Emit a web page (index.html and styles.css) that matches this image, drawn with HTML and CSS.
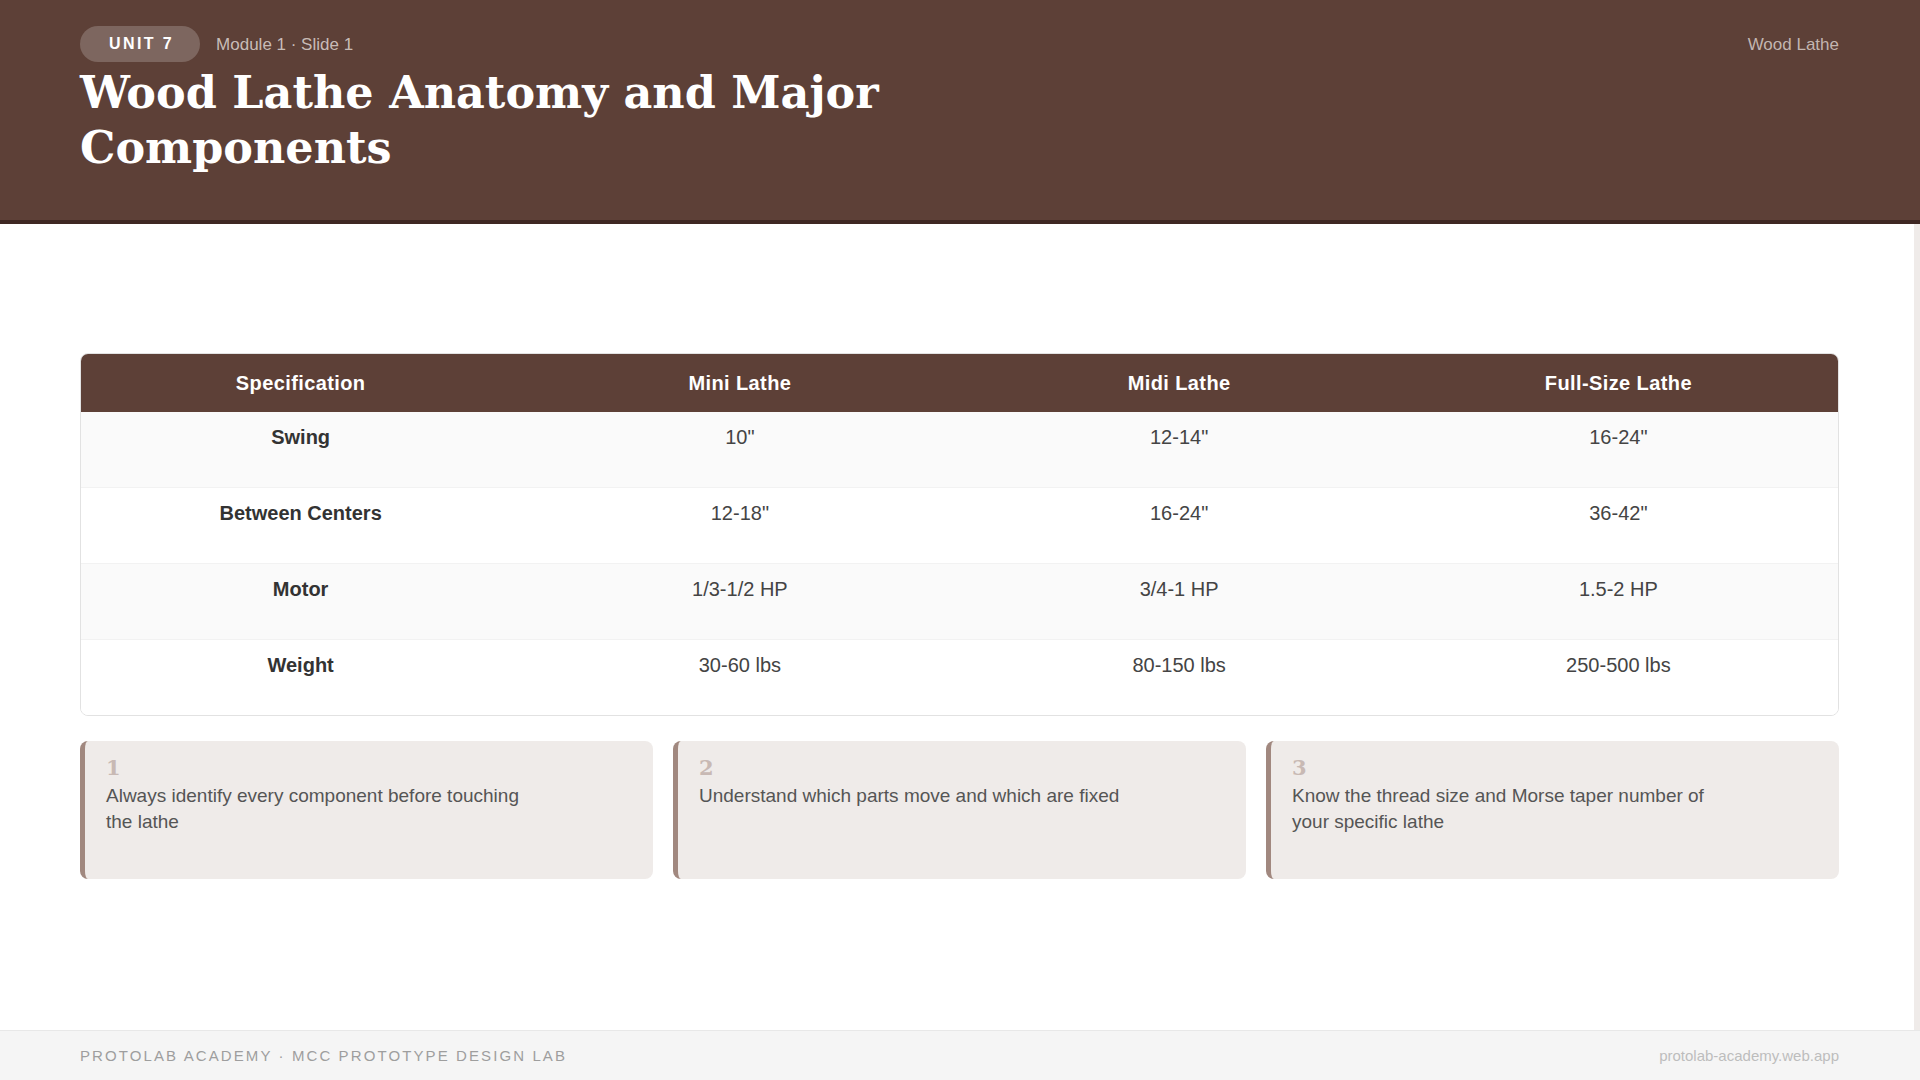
FILE: index.html
```html
<!DOCTYPE html>
<html lang="en">
<head>
<meta charset="utf-8">
<title>Wood Lathe Anatomy and Major Components</title>
<link rel="stylesheet" href="styles.css">
</head>
<body>
<div class="slide">
  <header class="top">
    <div class="top-row">
      <div class="meta">
        <span class="badge">UNIT 7</span>
        <span class="crumb">Module 1 · Slide 1</span>
      </div>
      <span class="topic">Wood Lathe</span>
    </div>
    <h1 class="title">Wood Lathe Anatomy and Major<br>Components</h1>
  </header>

  <main class="content">
    <div class="table-wrap">
      <table class="spec">
        <thead>
          <tr>
            <th>Specification</th>
            <th>Mini Lathe</th>
            <th>Midi Lathe</th>
            <th>Full-Size Lathe</th>
          </tr>
        </thead>
        <tbody>
          <tr>
            <td class="label">Swing</td>
            <td>10"</td>
            <td>12-14"</td>
            <td>16-24"</td>
          </tr>
          <tr>
            <td class="label">Between Centers</td>
            <td>12-18"</td>
            <td>16-24"</td>
            <td>36-42"</td>
          </tr>
          <tr>
            <td class="label">Motor</td>
            <td>1/3-1/2 HP</td>
            <td>3/4-1 HP</td>
            <td>1.5-2 HP</td>
          </tr>
          <tr>
            <td class="label">Weight</td>
            <td>30-60 lbs</td>
            <td>80-150 lbs</td>
            <td>250-500 lbs</td>
          </tr>
        </tbody>
      </table>
    </div>

    <div class="tips">
      <div class="tip">
        <div class="tip-num">1</div>
        <p class="tip-text">Always identify every component before touching the lathe</p>
      </div>
      <div class="tip">
        <div class="tip-num">2</div>
        <p class="tip-text">Understand which parts move and which are fixed</p>
      </div>
      <div class="tip">
        <div class="tip-num">3</div>
        <p class="tip-text">Know the thread size and Morse taper number of your specific lathe</p>
      </div>
    </div>
  </main>

  <footer class="foot">
    <span class="foot-left">PROTOLAB ACADEMY · MCC PROTOTYPE DESIGN LAB</span>
    <span class="foot-right">protolab-academy.web.app</span>
  </footer>
</div>
</body>
</html>
```

FILE: styles.css
```css
* { box-sizing: border-box; }

html, body {
  margin: 0;
  padding: 0;
  width: 1920px;
  height: 1080px;
  overflow: hidden;
  background: #ffffff;
  font-family: "Liberation Sans", Arial, sans-serif;
}

.slide {
  width: 1920px;
  height: 1080px;
  display: flex;
  flex-direction: column;
}

/* Header */
.top {
  height: 224px;
  flex: 0 0 224px;
  background: #5d4037;
  border-bottom: 4px solid #3e2723;
  padding: 26px 81px 0 80px;
}

.top-row {
  display: flex;
  justify-content: space-between;
  align-items: center;
  height: 36px;
}

.meta {
  display: flex;
  align-items: center;
  gap: 16px;
}

.badge {
  display: inline-block;
  height: 36px;
  line-height: 36px;
  padding: 0 26px 0 29px;
  border-radius: 18px;
  background: rgba(255, 255, 255, 0.2);
  color: #ffffff;
  font-weight: 700;
  font-size: 16px;
  letter-spacing: 0.15em;
}

.crumb {
  color: rgba(215, 204, 200, 0.9);
  font-size: 17px;
  padding-top: 2px;
}

.topic {
  color: rgba(215, 204, 200, 0.85);
  font-size: 17px;
  padding-top: 2px;
}

.title {
  margin: 3px 0 0 0;
  color: #ffffff;
  font-family: "DejaVu Serif", "Liberation Serif", serif;
  font-weight: 700;
  font-size: 44.5px;
  line-height: 55px;
}

/* Main */
.content {
  flex: 1 1 auto;
  border-right: 6px solid #efebe9;
  padding: 129px 75px 0 80px;
}

.table-wrap {
  border: 1px solid #e2e2e2;
  border-radius: 8px;
  overflow: hidden;
}

.spec {
  width: 100%;
  border-collapse: collapse;
  table-layout: fixed;
}

.spec th {
  background: #5d4037;
  color: #ffffff;
  font-size: 20px;
  font-weight: 700;
  letter-spacing: 0.4px;
  line-height: 23px;
  padding: 18px 16px 17px;
  text-align: center;
}

.spec td {
  font-size: 20px;
  line-height: 23px;
  color: #444444;
  text-align: center;
  vertical-align: top;
  padding: 14px 16px 38px;
}

.spec tbody tr:nth-child(odd) td { background: #fafafa; }
.spec tbody tr:nth-child(even) td { background: #ffffff; }
.spec tbody tr + tr td { border-top: 1px solid #f2f2f2; }

.spec td.label {
  font-weight: 700;
  color: #333333;
}

/* Tips */
.tips {
  margin-top: 25px;
  display: grid;
  grid-template-columns: repeat(3, 1fr);
  gap: 20px;
}

.tip {
  min-height: 138px;
  background: #efebe9;
  border-left: 5px solid #a1887f;
  border-radius: 8px;
  padding: 14px 24px 16px 21px;
}

.tip-num {
  font-family: "DejaVu Serif", "Liberation Serif", serif;
  font-weight: 700;
  font-size: 21px;
  line-height: 26px;
  color: #c8b9b4;
}

.tip-text {
  margin: 2px 0 0 0;
  max-width: 435px;
  font-size: 19px;
  line-height: 26px;
  color: #555555;
}

/* Footer */
.foot {
  flex: 0 0 50px;
  height: 50px;
  background: #f5f5f5;
  border-top: 1px solid #e8e8e8;
  padding: 0 81px 0 80px;
  display: flex;
  justify-content: space-between;
  align-items: center;
}

.foot-left {
  color: #9e9e9e;
  font-size: 15px;
  letter-spacing: 2.1px;
}

.foot-right {
  color: #bdbdbd;
  font-size: 15px;
}
```
